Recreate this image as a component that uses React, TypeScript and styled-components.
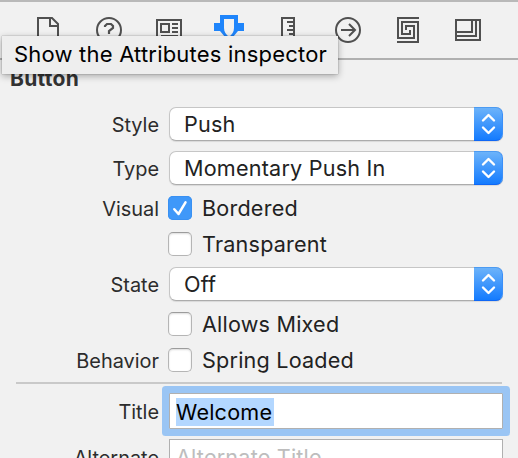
import React from 'react';
import styled, { createGlobalStyle, css } from 'styled-components';

const GlobalStyle = createGlobalStyle`
  * { box-sizing: border-box; }
  html, body { margin: 0; padding: 0; background: #f1f1f1; overflow: hidden; }
`;

const Inspector = styled.main`
  position: relative;
  width: 518px;
  height: 458px;
  overflow: hidden;
  background: #f1f1f1;
  color: #222;
  font-family: Inter, 'Liberation Sans', sans-serif;
`;

const Toolbar = styled.nav`
  display: flex;
  align-items: flex-start;
  justify-content: space-between;
  height: 60px;
  padding: 12px 35px 0 34px;
  border-top: 2px solid #b9b9b9;
  border-bottom: 2px solid #b0b0b0;
`;

const TabIcon = styled.svg<{ $active?: boolean }>`
  display: block;
  width: 30px;
  height: 30px;
  overflow: visible;
  fill: none;
  stroke: ${(p) => (p.$active ? '#1f85fb' : '#505050')};
  stroke-width: 2;
`;

const Tooltip = styled.div`
  position: absolute;
  left: 2px;
  top: 36px;
  width: 336px;
  height: 38px;
  padding-left: 12px;
  background: #eeeeee;
  box-shadow: 0 0 1px rgba(0, 0, 0, 0.45), 0 2px 7px rgba(0, 0, 0, 0.32);
  color: #000;
  font-size: 22px;
  line-height: 37px;
  letter-spacing: 0.2px;
  white-space: nowrap;
`;

const SectionTitle = styled.h1`
  margin: 0;
  height: 47px;
  padding: 7px 0 0 10px;
  color: #333;
  font-size: 21px;
  font-weight: 700;
  line-height: 24px;
  letter-spacing: 0.3px;
`;

const Row = styled.div<{ $height: number; $gap: number }>`
  display: grid;
  grid-template-columns: 159px 1fr;
  grid-template-rows: 100%;
  align-items: center;
  height: ${(p) => p.$height}px;
  margin-bottom: ${(p) => p.$gap}px;
`;

const Label = styled.span`
  grid-column: 1;
  justify-self: end;
  padding-top: 2px;
  color: #2c2c2c;
  font-size: 19.9px;
  line-height: 22px;
  white-space: nowrap;
`;

const Popup = styled.button`
  grid-column: 2;
  display: flex;
  justify-content: space-between;
  width: 334px;
  height: 34px;
  margin: 0 0 0 10px;
  padding: 0;
  border: 1px solid #c6c6c6;
  border-bottom-color: #acacac;
  border-right: 0;
  border-radius: 7px;
  background: #fff;
  box-shadow: 0 1px 1px rgba(0, 0, 0, 0.1);
  color: #222;
  font: inherit;
`;

const ValueText = styled.span`
  font-size: 21.6px;
  line-height: 24px;
  letter-spacing: 0.2px;
  white-space: nowrap;
`;

const PopupValue = styled(ValueText)`
  padding-left: 14px;
  line-height: 32px;
`;

const Stepper = styled.span`
  display: block;
  width: 29px;
  height: 34px;
  margin: -1px 0;
  border: solid #4c9bf2;
  border-width: 1px 1px 1px 0;
  border-right-color: #3b8ff8;
  border-bottom-color: #0f67f5;
  border-radius: 0 7px 7px 0;
  background: linear-gradient(#6cb3fa, #147bfe);
  svg { display: block; }
`;

const CheckLine = styled.label`
  grid-column: 2;
  display: flex;
  align-items: center;
  gap: 10px;
  padding-left: 9px;
`;

const CheckBox = styled.span<{ $checked?: boolean }>`
  width: 24px;
  height: 24px;
  flex: none;
  border-radius: 5px;
  ${(p) =>
    p.$checked
      ? css`
          background: #3f98f9;
          box-shadow: inset 0 0 0 1px #3990f2;
        `
      : css`
          border: 1px solid #b5b5b5;
          border-top-color: #9c9c9c;
          background: #fff;
          box-shadow: inset 0 1px 2px rgba(0, 0, 0, 0.14);
        `}
  svg { display: block; }
`;

const Divider = styled.hr`
  width: 486px;
  height: 2px;
  margin: 0 0 9px 16px;
  border: 0;
  background: #c9c9c9;
`;

const Field = styled.div<{ $focused?: boolean }>`
  grid-column: 2;
  display: flex;
  align-items: center;
  width: 334px;
  height: 36px;
  margin-left: 10px;
  padding-left: 6px;
  border: 1px solid #b0b0b0;
  background: #fff;
  color: ${(p) => (p.$focused ? '#000' : '#bdbdbd')};
  ${(p) =>
    p.$focused &&
    css`
      box-shadow: 0 0 0 7px #9ac5f4;
      border-radius: 1px;
    `}
`;

const Selection = styled.mark`
  display: flex;
  align-items: center;
  width: 98px;
  height: 28px;
  margin-top: 2px;
  background: #b3d7ff;
  color: #000;
`;

function PopupRow({ label, value, gap }: { label: string; value: string; gap: number }) {
  return (
    <Row $height={34} $gap={gap}>
      <Label>{label}</Label>
      <Popup>
        <PopupValue>{value}</PopupValue>
        <Stepper>
          <svg width="29" height="32" fill="none" stroke="#fff" strokeWidth="2.4" strokeLinecap="round" strokeLinejoin="round">
            <path d="M9 12.5l5.5-5.5 5.5 5.5M9 19.5l5.5 5.5 5.5-5.5" />
          </svg>
        </Stepper>
      </Popup>
    </Row>
  );
}

function CheckRow({ label, text, checked, gap }: {
  label?: string; text: string; checked?: boolean; gap: number;
}) {
  return (
    <Row $height={24} $gap={gap}>
      {label && <Label>{label}</Label>}
      <CheckLine>
        <CheckBox $checked={checked}>
          {checked && (
            <svg width="24" height="24" fill="none" stroke="#fff" strokeWidth="2.5" strokeLinecap="round" strokeLinejoin="round">
              <path d="M6.3 13.2l4.2 4.8 7-11.6" />
            </svg>
          )}
        </CheckBox>
        <ValueText>{text}</ValueText>
      </CheckLine>
    </Row>
  );
}

export default function App() {
  return (
    <Inspector>
      <GlobalStyle />
      <Toolbar>
        <TabIcon viewBox="34 14 30 30">
          <path d="M38 42V18h14l6 6v18zM50 18v8h8" />
        </TabIcon>
        <TabIcon viewBox="93 14 30 30">
          <circle cx="108" cy="30" r="12" />
          <path d="M104 27v-1l2-2h4l2 2v2l-4 3v3" strokeWidth="2.2" />
        </TabIcon>
        <TabIcon viewBox="153 14 30 30">
          <path d="M156 20h24v20h-24zM160 24h8v8h-8zM171 24h6M171 28h6M171 32h6M160 36h17" />
        </TabIcon>
        <TabIcon $active viewBox="213 14 30 30">
          <path d="M213 23h6v-8h18v8h6v8h-6l-5 6h-8l-5-6h-6zM223 19v9c0 4 2 6 5 9 3-3 5-5 5-9v-9z" fill="#1f85fb" fillRule="evenodd" stroke="none" />
        </TabIcon>
        <TabIcon viewBox="273 14 30 30">
          <path d="M282 18h12v24h-12zM287 22h6M289 26h4M287 30h6M289 34h4" />
        </TabIcon>
        <TabIcon viewBox="333 14 30 30">
          <circle cx="348" cy="30" r="12" />
          <path d="M341 30h13M349 24l6 6-6 6" />
        </TabIcon>
        <TabIcon viewBox="393 14 30 30">
          <path d="M419 18h-21v20h16V26h-8v4M397 42h21V22h-16v12h8v-4" />
        </TabIcon>
        <TabIcon viewBox="453 14 30 30">
          <path d="M456 20h24v20h-24zM456 32h16V20M456 36h20V20" />
        </TabIcon>
      </Toolbar>
      <SectionTitle>Button</SectionTitle>
      <PopupRow label="Style" value="Push" gap={10} />
      <PopupRow label="Type" value="Momentary Push In" gap={11} />
      <CheckRow label="Visual" text="Bordered" checked gap={12} />
      <CheckRow text="Transparent" gap={11} />
      <PopupRow label="State" value="Off" gap={11} />
      <CheckRow text="Allows Mixed" gap={12} />
      <CheckRow label="Behavior" text="Spring Loaded" gap={10} />
      <Divider />
      <Row $height={36} $gap={10}>
        <Label>Title</Label>
        <Field $focused>
          <Selection><ValueText>Welcome</ValueText></Selection>
        </Field>
      </Row>
      <Row $height={36} $gap={0}>
        <Label>Alternate</Label>
        <Field><ValueText>Alternate Title</ValueText></Field>
      </Row>
      <Tooltip>Show the Attributes inspector</Tooltip>
    </Inspector>
  );
}
